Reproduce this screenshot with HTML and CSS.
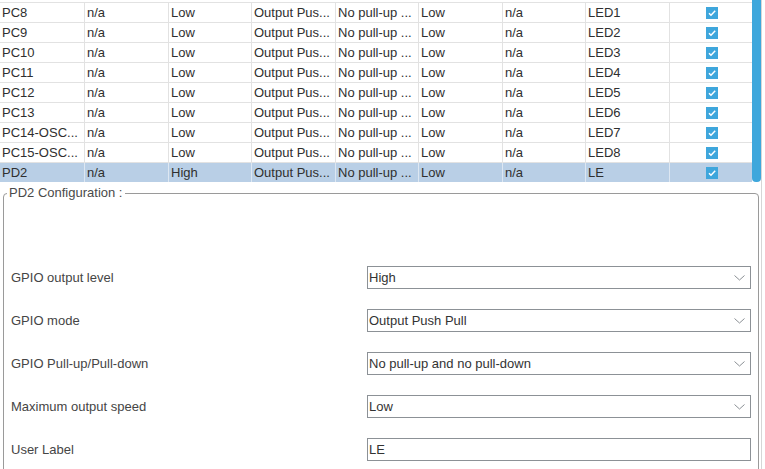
FILE: index.html
```html
<!DOCTYPE html>
<html>
<head>
<meta charset="utf-8">
<link rel="stylesheet" href="styles.css">
</head>
<body>
<div class="page">
  <div class="top">
    <div class="rows">
      <div class="row"><div class="c">PC8</div><div class="c">n/a</div><div class="c">Low</div><div class="c">Output Pus...</div><div class="c">No pull-up ...</div><div class="c">Low</div><div class="c">n/a</div><div class="c">LED1</div><div class="c ck"><span class="box"><svg viewBox="0 0 12 12" width="12" height="12"><path d="M3 6.2 L5 8.2 L9.2 3.8" fill="none" stroke="#fff" stroke-width="1.5"/></svg></span></div></div>
      <div class="row"><div class="c">PC9</div><div class="c">n/a</div><div class="c">Low</div><div class="c">Output Pus...</div><div class="c">No pull-up ...</div><div class="c">Low</div><div class="c">n/a</div><div class="c">LED2</div><div class="c ck"><span class="box"><svg viewBox="0 0 12 12" width="12" height="12"><path d="M3 6.2 L5 8.2 L9.2 3.8" fill="none" stroke="#fff" stroke-width="1.5"/></svg></span></div></div>
      <div class="row"><div class="c">PC10</div><div class="c">n/a</div><div class="c">Low</div><div class="c">Output Pus...</div><div class="c">No pull-up ...</div><div class="c">Low</div><div class="c">n/a</div><div class="c">LED3</div><div class="c ck"><span class="box"><svg viewBox="0 0 12 12" width="12" height="12"><path d="M3 6.2 L5 8.2 L9.2 3.8" fill="none" stroke="#fff" stroke-width="1.5"/></svg></span></div></div>
      <div class="row"><div class="c">PC11</div><div class="c">n/a</div><div class="c">Low</div><div class="c">Output Pus...</div><div class="c">No pull-up ...</div><div class="c">Low</div><div class="c">n/a</div><div class="c">LED4</div><div class="c ck"><span class="box"><svg viewBox="0 0 12 12" width="12" height="12"><path d="M3 6.2 L5 8.2 L9.2 3.8" fill="none" stroke="#fff" stroke-width="1.5"/></svg></span></div></div>
      <div class="row"><div class="c">PC12</div><div class="c">n/a</div><div class="c">Low</div><div class="c">Output Pus...</div><div class="c">No pull-up ...</div><div class="c">Low</div><div class="c">n/a</div><div class="c">LED5</div><div class="c ck"><span class="box"><svg viewBox="0 0 12 12" width="12" height="12"><path d="M3 6.2 L5 8.2 L9.2 3.8" fill="none" stroke="#fff" stroke-width="1.5"/></svg></span></div></div>
      <div class="row"><div class="c">PC13</div><div class="c">n/a</div><div class="c">Low</div><div class="c">Output Pus...</div><div class="c">No pull-up ...</div><div class="c">Low</div><div class="c">n/a</div><div class="c">LED6</div><div class="c ck"><span class="box"><svg viewBox="0 0 12 12" width="12" height="12"><path d="M3 6.2 L5 8.2 L9.2 3.8" fill="none" stroke="#fff" stroke-width="1.5"/></svg></span></div></div>
      <div class="row"><div class="c">PC14-OSC...</div><div class="c">n/a</div><div class="c">Low</div><div class="c">Output Pus...</div><div class="c">No pull-up ...</div><div class="c">Low</div><div class="c">n/a</div><div class="c">LED7</div><div class="c ck"><span class="box"><svg viewBox="0 0 12 12" width="12" height="12"><path d="M3 6.2 L5 8.2 L9.2 3.8" fill="none" stroke="#fff" stroke-width="1.5"/></svg></span></div></div>
      <div class="row"><div class="c">PC15-OSC...</div><div class="c">n/a</div><div class="c">Low</div><div class="c">Output Pus...</div><div class="c">No pull-up ...</div><div class="c">Low</div><div class="c">n/a</div><div class="c">LED8</div><div class="c ck"><span class="box"><svg viewBox="0 0 12 12" width="12" height="12"><path d="M3 6.2 L5 8.2 L9.2 3.8" fill="none" stroke="#fff" stroke-width="1.5"/></svg></span></div></div>
      <div class="row sel"><div class="c">PD2</div><div class="c">n/a</div><div class="c">High</div><div class="c">Output Pus...</div><div class="c">No pull-up ...</div><div class="c">Low</div><div class="c">n/a</div><div class="c">LE</div><div class="c ck"><span class="box"><svg viewBox="0 0 12 12" width="12" height="12"><path d="M3 6.2 L5 8.2 L9.2 3.8" fill="none" stroke="#fff" stroke-width="1.5"/></svg></span></div></div>
    </div>
    <div class="scroll"><div class="thumb"></div></div>
  </div>
  <fieldset class="group">
    <legend>PD2 Configuration :</legend>
    <div class="form">
      <div class="frow"><span class="lbl">GPIO output level</span><div class="select"><span>High</span><svg class="chev" viewBox="0 0 11 6" width="11" height="6"><path d="M0.5 0.5 L5.5 5 L10.5 0.5" fill="none" stroke="#8a8f94" stroke-width="1"/></svg></div></div>
      <div class="frow"><span class="lbl">GPIO mode</span><div class="select"><span>Output Push Pull</span><svg class="chev" viewBox="0 0 11 6" width="11" height="6"><path d="M0.5 0.5 L5.5 5 L10.5 0.5" fill="none" stroke="#8a8f94" stroke-width="1"/></svg></div></div>
      <div class="frow"><span class="lbl">GPIO Pull-up/Pull-down</span><div class="select"><span>No pull-up and no pull-down</span><svg class="chev" viewBox="0 0 11 6" width="11" height="6"><path d="M0.5 0.5 L5.5 5 L10.5 0.5" fill="none" stroke="#8a8f94" stroke-width="1"/></svg></div></div>
      <div class="frow"><span class="lbl">Maximum output speed</span><div class="select"><span>Low</span><svg class="chev" viewBox="0 0 11 6" width="11" height="6"><path d="M0.5 0.5 L5.5 5 L10.5 0.5" fill="none" stroke="#8a8f94" stroke-width="1"/></svg></div></div>
      <div class="frow"><span class="lbl">User Label</span><div class="select input"><span>LE</span></div></div>
    </div>
  </fieldset>
</div>
</body>
</html>
```

FILE: styles.css
```css
* { box-sizing: border-box; }
html, body { margin: 0; padding: 0; background: #fff; }
body {
  font-family: "Liberation Sans", Arial, sans-serif;
  font-size: 13px;
  color: #333;
  width: 765px;
  height: 469px;
  overflow: hidden;
}
.page {
  width: 762px;
  height: 469px;
  border-right: 1px solid #d6d6d6;
}
.top {
  display: flex;
  height: 182px;
}
.rows {
  width: 752px;
  margin-top: 2px;
  border-top: 1px solid #e2e2e2;
}
.row {
  display: grid;
  grid-template-columns: 85px 84px 83px 84px 83px 84px 83px 84px 82px;
  height: 20px;
  border-bottom: 1px solid #e2e2e2;
}
.row:last-child { border-bottom: none; height: 19px; }
.c {
  padding-left: 2px;
  line-height: 19px;
  white-space: nowrap;
  overflow: hidden;
  border-right: 1px solid #e2e2e2;
  color: #2f2f2f;
}
.c.ck { border-right: none; display: flex; align-items: center; justify-content: center; padding-left: 0; }
.sel { background: #b9cfe6; }
.sel .c { border-right-color: #dde7f2; }
.sel .c.ck { border-right: none; }
.box {
  width: 12px;
  height: 12px;
  background: #3ea6dc;
  display: block;
  margin-left: 1px;
}
.box svg { display: block; }
.scroll {
  width: 9px;
  height: 182px;
}
.thumb {
  width: 9px;
  height: 182px;
  background: #3ea7dc;
  border-radius: 0 0 4px 4px;
}
.group {
  margin: 4px 0 0 3px;
  width: 756px;
  height: 300px;
  border: 1px solid #9a9a9a;
  border-radius: 4px;
  padding: 0;
}
.group legend {
  margin-left: 3px;
  padding: 0 3px 0 2px;
  color: #4a4a4a;
  font-size: 13px;
  line-height: 14px;
}
.form {
  padding-top: 66px;
  display: flex;
  flex-direction: column;
  gap: 20px;
}
.frow {
  display: flex;
  align-items: center;
  height: 23px;
  padding-left: 7px;
}
.lbl {
  width: 356px;
  color: #454545;
}
.select {
  width: 384px;
  height: 23px;
  border: 1px solid #8c9196;
  display: flex;
  align-items: center;
  justify-content: space-between;
  padding: 0 5px 0 1px;
  color: #333;
}
.chev { display: block; margin-top: 1px; }
```
